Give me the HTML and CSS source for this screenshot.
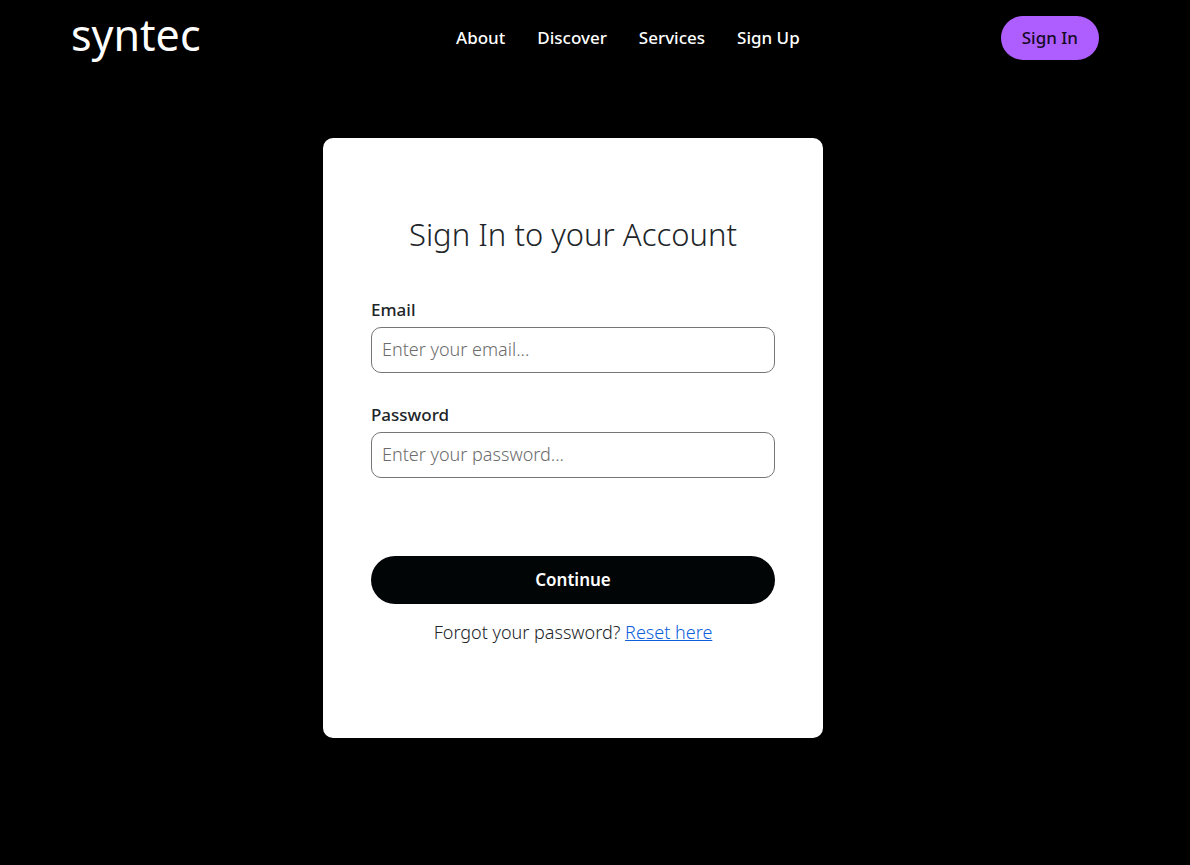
FILE: index.html
```html
<!DOCTYPE html>
<html lang="en">
<head>
<meta charset="utf-8">
<meta name="viewport" content="width=device-width, initial-scale=1">
<title>syntec</title>
<link rel="stylesheet" href="styles.css">
</head>
<body>
<header class="navbar">
  <a class="brand" href="#">syntec</a>
  <nav class="nav-links">
    <a href="#">About</a>
    <a href="#">Discover</a>
    <a href="#">Services</a>
    <a href="#">Sign Up</a>
  </nav>
  <button class="signin" type="button">Sign In</button>
</header>
<main class="page">
  <form class="card">
    <h1 class="title">Sign In to your Account</h1>
    <div class="field">
      <label for="email">Email</label>
      <input id="email" type="email" placeholder="Enter your email...">
    </div>
    <div class="field">
      <label for="password">Password</label>
      <input id="password" type="password" placeholder="Enter your password...">
    </div>
    <button class="continue" type="submit">Continue</button>
    <p class="forgot">Forgot your password? <a href="#">Reset here</a></p>
  </form>
</main>
</body>
</html>
```
FILE: styles.css
```css
* { box-sizing: border-box; }
body {
  margin: 0;
  background: #000;
  color: #212529;
  font: 300 17px/24px "Noto Sans", "Open Sans", sans-serif;
}
.navbar {
  display: flex;
  justify-content: space-between;
  align-items: center;
  min-height: 76px;
  padding: 0 91px 0 71px;
}
.brand {
  min-width: 184px;
  padding-bottom: 6px;
  color: #fff;
  font-size: 43px;
  font-weight: 400;
  line-height: 64px;
  text-decoration: none;
}
.nav-links { display: flex; gap: 32px; }
.nav-links a { color: #fff; font-weight: 500; text-decoration: none; }
.signin {
  height: 44px;
  padding: 0 21px;
  border: 0;
  border-radius: 22px;
  background: #ae5eff;
  color: #140a24;
  font: inherit;
  font-weight: 500;
}
.page { padding: 62px 44px 62px 0; }
.card {
  max-width: 500px;
  min-height: 600px;
  margin: 0 auto;
  padding: 72px 48px;
  border-radius: 10px;
  background: #fff;
}
.title {
  margin: 0 0 40px;
  font-size: 31px;
  font-weight: 300;
  line-height: 48px;
  text-align: center;
}
.field { display: flex; flex-direction: column; gap: 5px; margin-bottom: 30px; }
.field label { font-weight: 500; }
.field input {
  width: 100%;
  height: 46px;
  padding: 0 10px 2px;
  border: 1px solid #767676;
  border-radius: 10px;
  font: inherit;
  font-size: 18px;
}
.field input::placeholder { color: #6c6c6c; }
.continue {
  width: 100%;
  height: 48px;
  margin-top: 48px;
  border: 0;
  border-radius: 24px;
  background: #020506;
  color: #fff;
  font: inherit;
  font-weight: 600;
}
.forgot { margin: 16px 0 0; font-size: 18px; text-align: center; }
.forgot a { color: #0d5fdc; text-decoration-thickness: 1px; }
```
